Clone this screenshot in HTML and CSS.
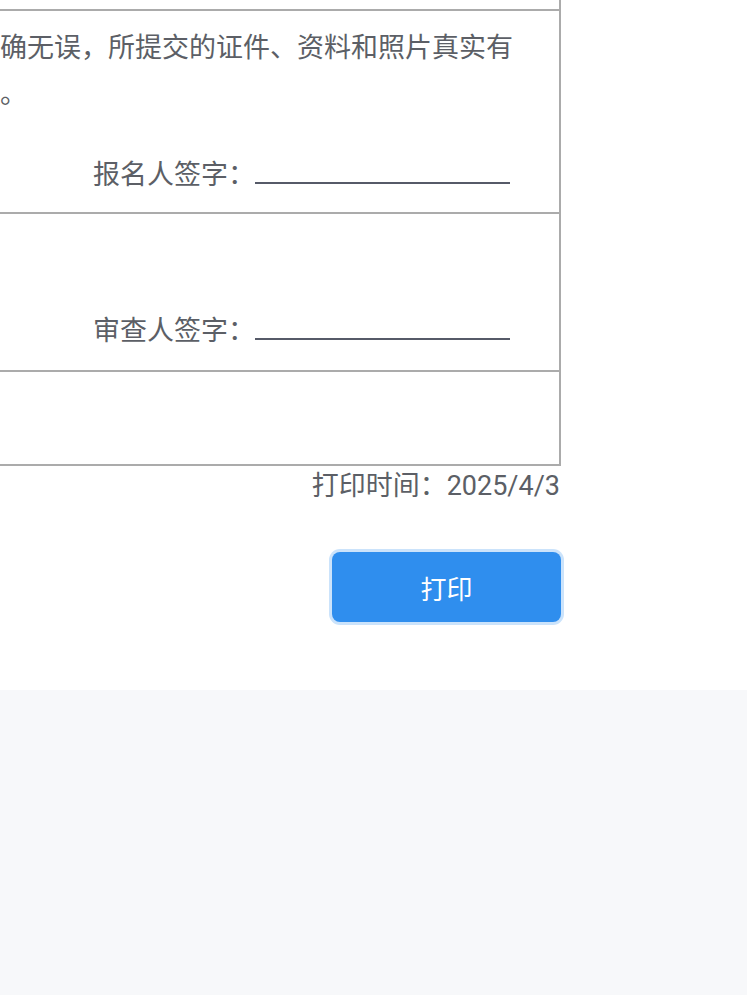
FILE: index.html
```html
<!DOCTYPE html>
<html lang="zh-CN">
<head>
<meta charset="utf-8">
<title>打印</title>
<link rel="stylesheet" href="styles.css">
</head>
<body>
<div class="screen">
  <div class="sheet">
    <div class="table">
      <div class="row row-prev"></div>
      <div class="row row-promise">
        <p class="promise">准确无误，所提交的证件、资料和照片真实有效。</p>
        <div class="sign">
          <span class="sign-label">报名人签字：</span>
          <span class="sign-line"></span>
        </div>
      </div>
      <div class="row row-review">
        <div class="review-space"></div>
        <div class="sign">
          <span class="sign-label">审查人签字：</span>
          <span class="sign-line"></span>
        </div>
      </div>
      <div class="row row-empty"></div>
    </div>
    <div class="print-time">打印时间：2025/4/3</div>
    <div class="actions">
      <button class="btn-print" type="button">打印</button>
    </div>
  </div>
</div>
</body>
</html>
```

FILE: styles.css
```css
html, body {
  margin: 0;
  padding: 0;
}

body {
  background: #f7f8fa;
  font-family: Roboto, "Noto Sans CJK SC", "Noto Sans", sans-serif;
  color: #5c5f66;
}

.screen {
  background: #ffffff;
  height: 690px;
  overflow: hidden;
}

.sheet {
  width: 621px;
  margin-left: -60px;
}

.table {
  border-left: 2px solid #ababab;
  border-right: 2px solid #ababab;
}

.row {
  border-bottom: 2px solid #ababab;
  box-sizing: border-box;
}

.row-prev {
  height: 11px;
}

.row-promise {
  padding: 14px 30px 14px 31px;
}

.promise {
  margin: 0;
  font-size: 27px;
  line-height: 46px;
}

.sign {
  display: flex;
  justify-content: flex-end;
  align-items: center;
  padding-right: 19px;
  font-size: 27px;
  line-height: 46px;
}

.row-promise .sign {
  margin-top: 35px;
}

.sign-line {
  width: 255px;
  height: 2px;
  margin-top: 15px;
  background: #565a68;
}

.row-review {
  padding: 14px 30px 16px 31px;
}

.review-space {
  height: 80px;
}

.row-empty {
  height: 94px;
}

.print-time {
  text-align: right;
  font-size: 27px;
  line-height: 40px;
  padding-right: 1px;
}

.actions {
  display: flex;
  justify-content: flex-end;
  margin-top: 46px;
}

.btn-print {
  width: 229px;
  height: 70px;
  margin: 0;
  border: none;
  border-radius: 8px;
  background: #2f8eee;
  color: #ffffff;
  font-family: Roboto, "Noto Sans CJK SC", sans-serif;
  font-size: 26px;
  box-shadow: 0 0 0 3px #cbe3fb;
  cursor: pointer;
}
```
